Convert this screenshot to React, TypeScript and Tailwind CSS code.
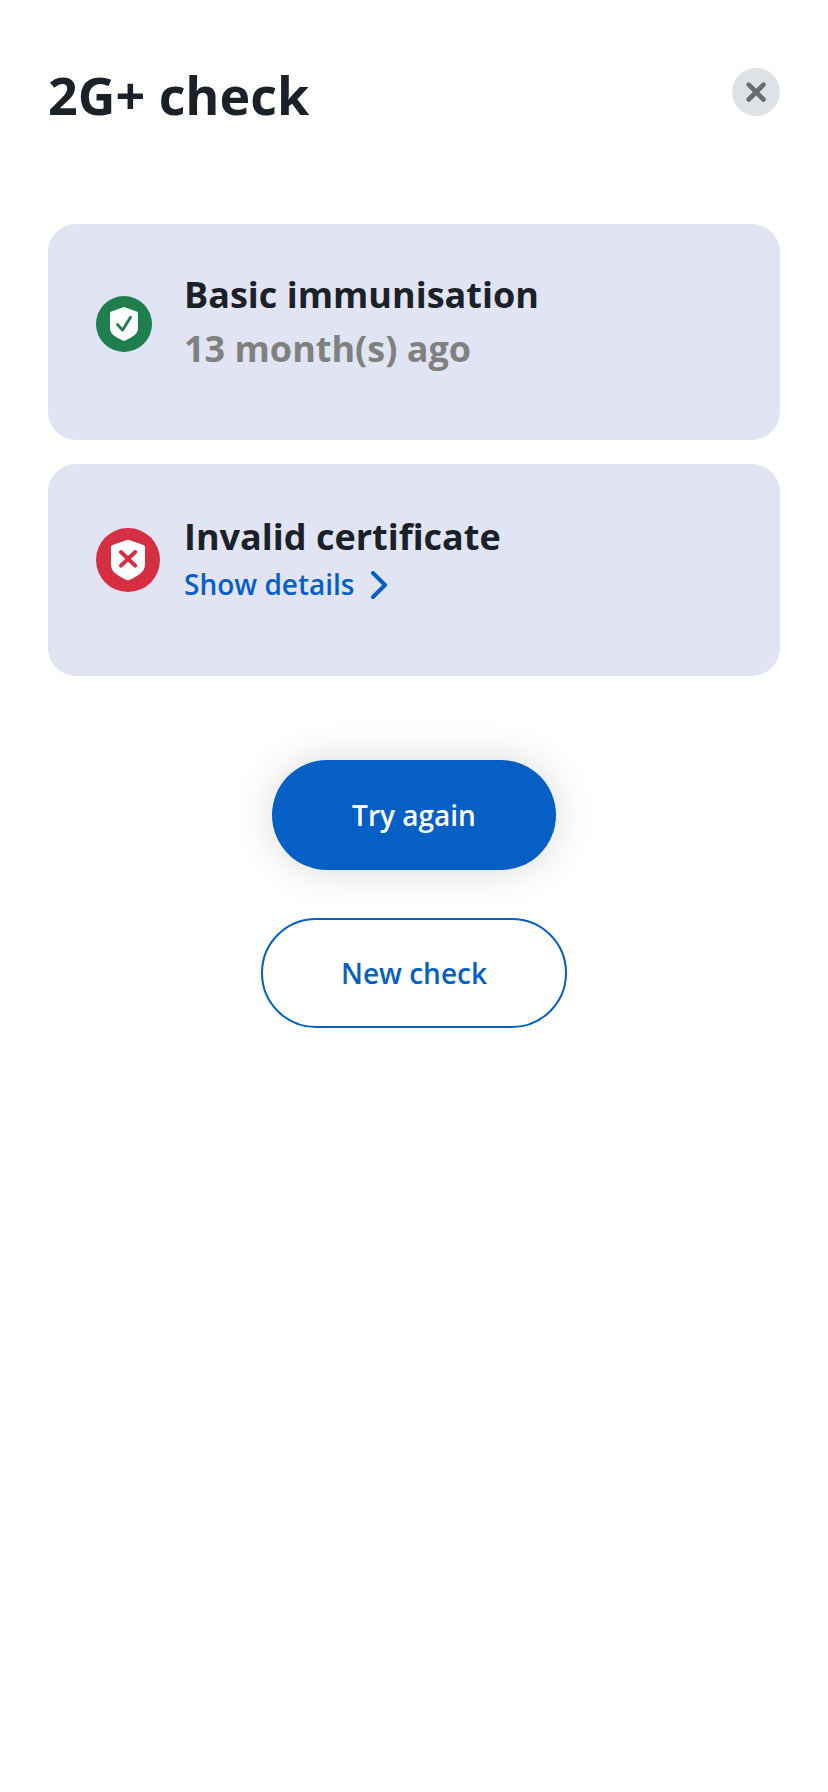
import type { ReactNode } from "react";

function CloseButton() {
  return (
    <button aria-label="Close" className="mt-[68px] flex size-12 items-center justify-center rounded-full bg-[#dee2e5]">
      <svg viewBox="0 0 48 48" className="size-12" fill="none" stroke="#666e6e" strokeWidth="4.6" strokeLinecap="round">
        <path d="M16.7 16.7 31.5 31.5M31.5 16.7 16.7 31.5" />
      </svg>
    </button>
  );
}

function ValidIcon() {
  return (
    <svg viewBox="0 0 56 56" className="size-14 shrink-0" fill="none">
      <circle cx="28" cy="28" r="28" fill="#1e7e4e" />
      <path d="M28 11 40.6 15.4Q42 16 42 17.4V31.5C42 38 37.5 40.5 29.2 44.6Q28 45.2 26.8 44.6C18.5 40.5 14 38 14 31.5V17.4Q14 16 15.4 15.4Z" fill="#fff" />
      <path d="m21.5 28.5 5 5.7 8-13" stroke="#1e7e4e" strokeWidth="2.8" strokeLinecap="round" strokeLinejoin="round" />
    </svg>
  );
}

function InvalidIcon() {
  return (
    <svg viewBox="0 0 64 64" className="size-16 shrink-0" fill="none">
      <circle cx="32" cy="32" r="32" fill="#d62f43" />
      <path d="M30.8 12.1Q32 11.6 33.2 12.1L47.4 17Q49 17.6 49 19.4V36C49 44 43.5 47 33.4 51.9Q32 52.6 30.6 51.9C20.5 47 15 44 15 36V19.4Q15 17.6 16.6 17Z" fill="#fff" />
      <path d="M25 24 39.2 37.6M39.2 24 25 37.6" stroke="#d62f43" strokeWidth="4" strokeLinecap="round" />
    </svg>
  );
}

function Card({ className, children }: { className: string; children: ReactNode }) {
  return <section className={`flex rounded-[28px] bg-[#e1e4f3] pl-12 ${className}`}>{children}</section>;
}

export default function App() {
  return (
    <main className="flex min-h-[1792px] w-full flex-col bg-white px-12 font-['Open_Sans','Noto_Sans',sans-serif] text-[#1b2129]">
      <header className="flex h-[224px] justify-between">
        <h1 className="mt-[59px] text-[52px] leading-[71px] font-bold whitespace-nowrap">2G+ check</h1>
        <CloseButton />
      </header>

      <Card className="h-[216px] gap-8 pt-[44px]">
        <div className="pt-7">
          <ValidIcon />
        </div>
        <div className="text-[36px] leading-[54px] font-bold">
          <h2>Basic immunisation</h2>
          <p className="text-[#808080]">13 month(s) ago</p>
        </div>
      </Card>

      <Card className="mt-6 h-[212px] gap-6 pt-[46px]">
        <div className="pt-[18px]">
          <InvalidIcon />
        </div>
        <div>
          <h2 className="text-[36px] leading-[54px] font-bold">Invalid certificate</h2>
          <a className="flex items-center gap-4 text-[28px] font-semibold text-[#055fc5]">
            <span className="pb-0.5 leading-10">Show details</span>
            <svg viewBox="0 0 16 28" className="h-7 w-4" fill="none" stroke="currentColor" strokeWidth="4" strokeLinecap="round" strokeLinejoin="round">
              <path d="m2 2 12 12L2 26" />
            </svg>
          </a>
        </div>
      </Card>

      <div className="mt-[84px] flex flex-col items-center gap-12 text-[28px] font-semibold">
        <button className="h-[110px] w-[284px] rounded-full bg-[#055fc5] text-white shadow-[0_0_40px_rgba(0,0,0,0.15)]">
          Try again
        </button>
        <button className="h-[110px] w-[306px] rounded-full border-2 border-[#055fc5] text-[#055fc5]">New check</button>
      </div>
    </main>
  );
}
